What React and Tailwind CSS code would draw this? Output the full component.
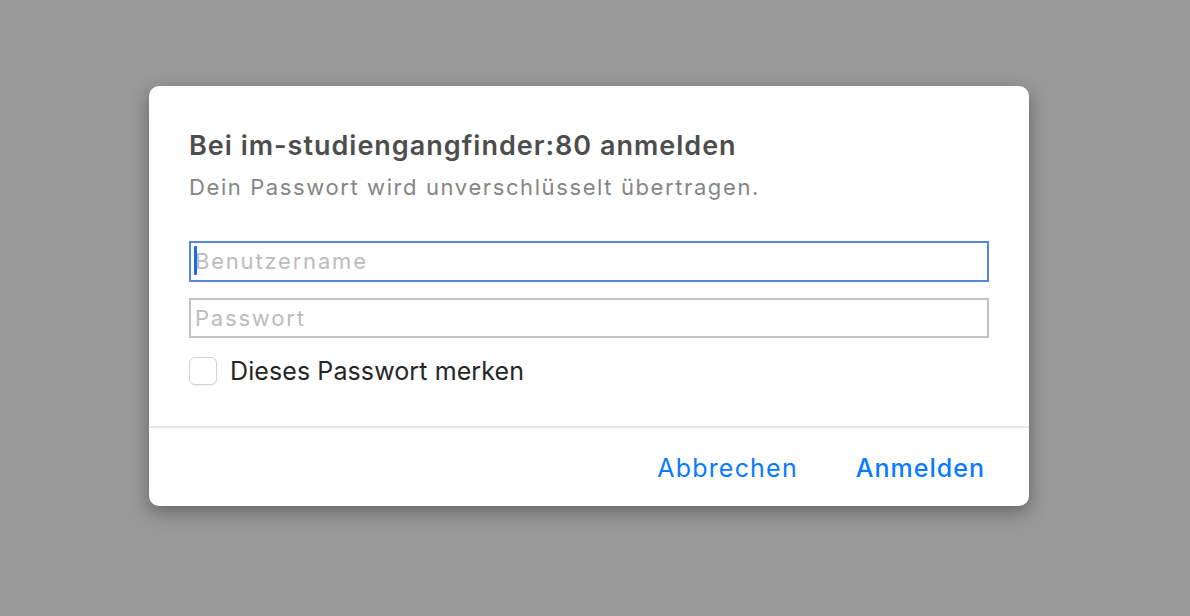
export default function App() {
  return (
    <div className="w-[1190px] h-[616px] bg-[#999999] flex items-start justify-start pt-[86px] pl-[149px]" style={{ fontFamily: "Inter, 'Noto Sans', sans-serif" }}>
      <div className="w-[880px] h-[420px] bg-white rounded-[10px] shadow-[0_6px_18px_rgba(0,0,0,0.35)] flex flex-col">
        <div className="px-[40px] pt-[42px] flex flex-col">
          <div className="text-[27px] leading-[36px] font-semibold text-[#4d4d4d] tracking-[1px]">Bei im-studiengangfinder:80 anmelden</div>
          <div className="text-[22px] leading-[28px] mt-[9px] text-[#858585] tracking-[1.6px]">Dein Passwort wird unverschlüsselt übertragen.</div>
          <div className="mt-[40px] h-[41px] border-2 border-[#5486dc] flex items-center relative">
            <div className="absolute left-[3px] top-[3px] w-[3px] h-[29px] bg-[#1a6af0] rounded-[1px]"></div>
            <span className="pl-[4px] text-[22px] text-[#bcbcbc] tracking-[1.8px]">Benutzername</span>
          </div>
          <div className="mt-[16px] h-[40px] border-2 border-[#c2c2c2] flex items-center">
            <span className="pl-[4px] text-[22px] text-[#bcbcbc] tracking-[1.8px]">Passwort</span>
          </div>
          <div className="mt-[19px] h-[28px] flex items-center">
            <div className="w-[28px] h-[28px] rounded-[6px] border border-[#d4d4d4] bg-white shadow-[0_1px_1px_rgba(0,0,0,0.06)]"></div>
            <span className="ml-[13px] text-[25px] leading-[28px] text-[#262626] tracking-[0.1px]">Dieses Passwort merken</span>
          </div>
        </div>
        <div className="mt-auto border-t-2 border-[#e6e6e6] h-[80px] pt-[3px] flex items-center justify-end pr-[44px] gap-[58px]">
          <span className="text-[25px] text-[#0a7aff] tracking-[1.2px]">Abbrechen</span>
          <span className="text-[25px] font-medium text-[#0a7aff] tracking-[1px]">Anmelden</span>
        </div>
      </div>
    </div>
  );
}
